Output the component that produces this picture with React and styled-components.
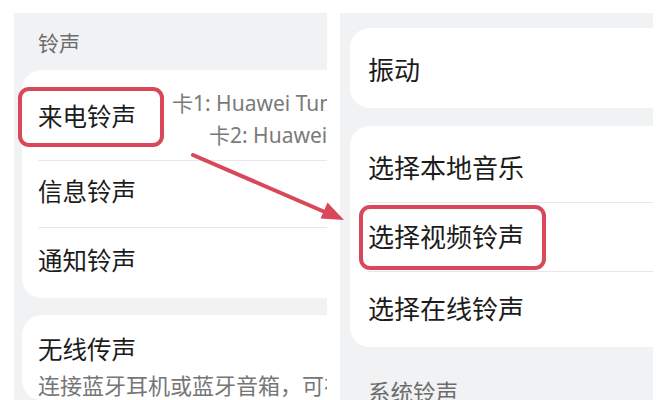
import React from 'react'
import styled, { createGlobalStyle } from 'styled-components'

const GlobalStyle = createGlobalStyle`
  html, body {
    margin: 0;
    padding: 0;
    background: #ffffff;
  }
  body {
    font-family: "Noto Sans", "Noto Sans CJK SC", sans-serif;
    color: #1c1c1c;
  }
`

const Page = styled.div`
  position: relative;
  display: flex;
  gap: 13px;
  width: 667px;
  height: 400px;
  box-sizing: border-box;
  padding: 13px 0 0 14px;
  overflow: hidden;
  background: #ffffff;
`

const Panel = styled.div`
  width: 313px;
  flex: none;
  box-sizing: border-box;
  padding: ${p => p.$pad};
  background: #f1f2f4;
  overflow: hidden;
`

const GroupTitle = styled.div`
  padding-left: ${p => p.$inset}px;
  margin-top: ${p => p.$top}px;
  margin-bottom: ${p => p.$bottom}px;
  font-size: ${p => p.$size}px;
  line-height: 30px;
  color: #6c6c6c;
  white-space: nowrap;
`

const Card = styled.div`
  width: calc(100% + 40px);
  margin-bottom: ${p => p.$gap || 0}px;
  background: #ffffff;
  border-radius: 20px;
`

const Row = styled.div`
  display: flex;
  align-items: center;
  height: ${p => p.$h}px;
  margin-left: ${p => p.$inset}px;
  box-sizing: border-box;
  padding-top: ${p => p.$shift || 0}px;
  padding-bottom: ${p => p.$lift || 0}px;
  white-space: nowrap;

  & + & {
    border-top: 1px solid #e8e8ea;
  }
`

const Label = styled.span`
  position: relative;
  font-size: ${p => p.$size}px;
  line-height: 30px;
  color: #1c1c1c;
`

const Marked = styled(Label)`
  &::after {
    content: '';
    position: absolute;
    left: ${p => p.$box[0]}px;
    top: ${p => p.$box[1]}px;
    right: ${p => p.$box[2]}px;
    bottom: ${p => p.$box[3]}px;
    border: 4px solid #d8485a;
    border-radius: 11px;
  }
`

const Value = styled.div`
  margin-left: 36px;
  padding-top: 4px;
  font-size: 21px;
  line-height: 32px;
  color: #7a7a7a;
`

const ValueLine = styled.div`
  padding-left: ${p => p.$indent || 0}px;
`

const TextBlock = styled.div`
  margin-left: 16px;
  padding-top: 20px;
  white-space: nowrap;
`

const Hint = styled.div`
  margin-top: 5px;
  font-size: 22px;
  line-height: 30px;
  color: #767676;
`

const Arrow = styled.svg`
  position: absolute;
  left: 0;
  top: 0;
  pointer-events: none;
`

const RED = '#d8485a'

export default function App() {
  return (
    <>
      <GlobalStyle />
      <Page>
        <Panel $pad="0 0 0 8px">
          <GroupTitle $inset={16} $top={15} $bottom={12} $size={21}>铃声</GroupTitle>
          <Card $gap={17}>
            <Row $h={90} $inset={16} $shift={3}>
              <Marked $size={24.5} $box={[-20, -15, -28, -15]}>来电铃声</Marked>
              <Value>
                <ValueLine>卡1: Huawei Tune</ValueLine>
                <ValueLine $indent={37}>卡2: Huawei Tune</ValueLine>
              </Value>
            </Row>
            <Row $h={67} $inset={16} $lift={4}>
              <Label $size={24.5}>信息铃声</Label>
            </Row>
            <Row $h={71} $inset={16} $lift={5}>
              <Label $size={24.5}>通知铃声</Label>
            </Row>
          </Card>
          <Card>
            <TextBlock>
              <Label $size={24.5}>无线传声</Label>
              <Hint>连接蓝牙耳机或蓝牙音箱，可在耳机或音箱上播放</Hint>
            </TextBlock>
          </Card>
        </Panel>

        <Panel $pad="15px 0 0 10px">
          <Card $gap={18}>
            <Row $h={80} $inset={18} $shift={4}>
              <Label $size={26}>振动</Label>
            </Row>
          </Card>
          <Card>
            <Row $h={76} $inset={18} $shift={8}>
              <Label $size={26}>选择本地音乐</Label>
            </Row>
            <Row $h={69} $inset={18}>
              <Marked $size={26} $box={[-9, -17, -22, -18]}>选择视频铃声</Marked>
            </Row>
            <Row $h={76} $inset={18} $lift={2}>
              <Label $size={26}>选择在线铃声</Label>
            </Row>
          </Card>
          <GroupTitle $inset={18} $top={31} $bottom={0} $size={22.5}>系统铃声</GroupTitle>
        </Panel>

        <Arrow width="667" height="400" viewBox="0 0 667 400">
          <line x1="193" y1="155" x2="326" y2="212.5" stroke={RED} strokeWidth="4" strokeLinecap="round" />
          <polygon points="344,220 320.5,218.5 327.5,202.5" fill={RED} />
        </Arrow>
      </Page>
    </>
  )
}
